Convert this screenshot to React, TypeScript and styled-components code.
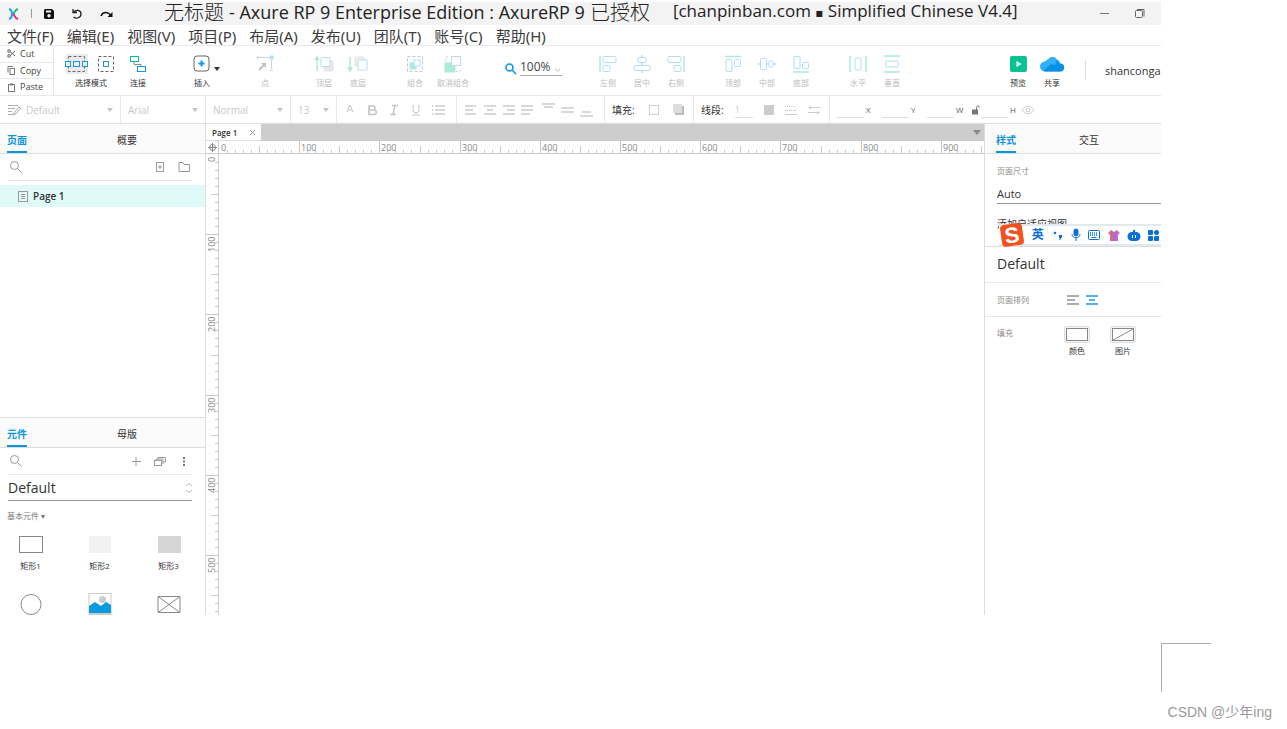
import React, { useLayoutEffect, useRef, useState } from "react";
import styled, { createGlobalStyle, css } from "styled-components";

const latin = `"Open Sans", "Noto Sans CJK SC", sans-serif`;
const blue = "#0a95dd";
const line = "#e8e8e8";

const GlobalStyle = createGlobalStyle`
  *, *::before, *::after { box-sizing: border-box; }
  body { margin: 0; background: #fff; color: #333; font-family: ${latin}; font-size: 8px; }
  button, input, select { font: inherit; color: inherit; background: none; border: 0; padding: 0; margin: 0; border-radius: 0; outline: 0; }
  select { appearance: none; }
  svg { display: block; flex: none; overflow: visible; }
  h1, h2 { margin: 0; font-weight: 400; }
`;

const Page = styled.div`
  display: flex;
  flex-direction: column;
  min-height: 100vh;
`;

const AppWindow = styled.div`
  position: relative;
  display: flex;
  flex: 1;
  flex-direction: column;
  margin: 0 126px 0 0;
  padding-top: 2px;
  overflow: hidden;
`;

/* ---------- title and menu ---------- */
const TitleBar = styled.header`
  display: flex;
  align-items: center;
  height: 23px;
  padding: 0 16px 0 8px;
  background: #f3f3f3;
  white-space: nowrap;
`;

const QuickActions = styled.div`
  display: flex;
  align-items: center;
  gap: 17px;
  width: 156px;
`;

const LogoGroup = styled.div`
  display: flex;
  align-items: center;
  gap: 12px;
`;

const IconButton = styled.button`
  display: flex;
  align-items: center;
  justify-content: center;
`;

const Title = styled.h1`
  display: flex;
  flex: 1;
  align-items: center;
  height: 23px;
  padding-bottom: 3px;
  font-size: 18px;
  line-height: 20px;
  color: #222;
`;

const TitleCjk = styled.span`
  margin-right: 5px;
  font-family: "Noto Sans CJK SC", sans-serif;
  font-weight: 300;
  font-size: 20px;
`;

const TitleText = styled.span`
  margin-right: 5px;
`;

const Version = styled.span`
  margin-left: 18px;
  font-size: 17px;
`;

const Bullet = styled.span`
  font-family: "DejaVu Sans", sans-serif;
  font-size: 12px;
`;

const WindowButtons = styled.div`
  display: flex;
  align-items: center;
  gap: 26px;
`;

const MenuBar = styled.nav`
  display: flex;
  align-items: center;
  gap: 13px;
  height: 21px;
  padding: 1px 7px 0;
  border-bottom: 1px solid ${line};
`;

const MenuItem = styled.button`
  font-size: 15px;
  line-height: 20px;
  font-family: "Noto Sans", "Noto Sans CJK SC", sans-serif;
  white-space: nowrap;
  color: #3c3c3c;
`;

/* ---------- toolbar ---------- */
const Toolbar = styled.div`
  display: flex;
  height: 50px;
  border-bottom: 1px solid ${line};
`;

const Clipboard = styled.div`
  display: flex;
  flex-direction: column;
  width: 54px;
  flex: none;
  border-right: 1px solid ${line};
`;

const ClipButton = styled.button`
  display: flex;
  flex: 1;
  align-items: center;
  gap: 4px;
  padding-left: 7px;
  font-size: 9px;
  line-height: 12px;
  color: #444;
  & + & { border-top: 1px solid ${line}; }
`;

const ToolGroup = styled.div<{ $gap?: number }>`
  display: flex;
  flex: none;
  margin-left: ${(p) => p.$gap ?? 23}px;
`;

const ToolButton = styled.button<{ $width?: number; $dim?: boolean }>`
  position: relative;
  display: flex;
  flex-direction: column;
  align-items: center;
  gap: 4px;
  width: ${(p) => p.$width ?? 34}px;
  padding-top: 9px;
  font-size: 8px;
  line-height: 12px;
  color: #333;
  white-space: nowrap;
  ${(p) => p.$dim && css`color: #bbb; svg { opacity: 0.32; }`}
`;

const IconPair = styled.span`
  display: flex;
  gap: 9px;
  padding-right: 3px;
`;

const CaretBadge = styled.span`
  position: absolute;
  left: 29px;
  top: 21px;
`;

const ZoomField = styled.label`
  display: flex;
  align-items: center;
  gap: 4px;
  height: 42px;
  margin-left: 31px;
`;

const ZoomSelectBox = styled.span`
  display: flex;
  align-items: center;
  width: 42px;
  height: 18px;
  border-bottom: 1px solid #aaa;
  select { width: 34px; font-size: 12px; line-height: 16px; color: #444; }
`;

const Account = styled.div`
  display: flex;
  width: 160px;
  flex: none;
  margin-left: auto;
`;

const UserName = styled.button`
  height: 20px;
  margin: 14px 0 0 16px;
  padding-left: 19px;
  border-left: 1px solid #ddd;
  font-size: 11px;
  color: #333;
`;

/* ---------- format bar ---------- */
const FormatBar = styled.div`
  display: flex;
  height: 28px;
  border-bottom: 1px solid #ddd;
`;

const FormatCell = styled.div<{ $width?: number; $gap?: number }>`
  display: flex;
  flex: ${(p) => (p.$width ? "none" : "1")};
  align-items: center;
  gap: ${(p) => p.$gap ?? 5}px;
  width: ${(p) => (p.$width ? `${p.$width}px` : "auto")};
  padding: 0 7px;
  border-right: ${(p) => (p.$width ? `1px solid ${line}` : "0")};
  color: #c8c8c8;
  select { flex: 1; min-width: 0; font-size: 10px; line-height: 14px; }
`;

const FormatLabel = styled.span`
  font-size: 10px;
  color: #333;
  white-space: nowrap;
`;

const LineWidth = styled.input`
  width: 18px;
  height: 16px;
  border-bottom: 1px solid #ddd;
  font-size: 9px;
`;

const Dimension = styled.label`
  display: flex;
  align-items: center;
  gap: 2px;
  width: 45px;
  font-size: 8px;
  color: #555;
  input { width: 27px; height: 16px; border-bottom: 1px solid #ddd; }
`;

/* ---------- workspace ---------- */
const Workspace = styled.main`
  display: flex;
  flex: 1;
  min-height: 0;
`;

const Sidebar = styled.aside`
  display: flex;
  flex-direction: column;
  flex: none;
  width: 206px;
  border-right: 1px solid #ddd;
`;

const PagesPanel = styled.section`
  flex: 1;
`;

const WidgetsPanel = styled.section`
  height: 198px;
  border-top: 1px solid #ddd;
  overflow: hidden;
`;

const Tabs = styled.div`
  display: grid;
  grid-template-columns: 110px 1fr;
  height: 30px;
  padding-left: 7px;
  background: #fbfbfb;
  border-bottom: 1px solid #ddd;
`;

const RightTabs = styled(Tabs)`
  grid-template-columns: 83px 1fr;
  padding-left: 11px;
`;

const Tab = styled.button<{ $active?: boolean }>`
  justify-self: start;
  height: 29px;
  padding-top: 5px;
  border-bottom: 2px solid ${(p) => (p.$active ? blue : "transparent")};
  font-size: 10px;
  line-height: 14px;
  font-weight: ${(p) => (p.$active ? 700 : 400)};
  color: ${(p) => (p.$active ? blue : "#333")};
`;

const SearchRow = styled.div`
  display: flex;
  align-items: center;
  gap: 12px;
  height: 27px;
  margin: 0 13px 0 8px;
  padding: 0 2px;
  border-bottom: 1px solid ${line};
  input { flex: 1; min-width: 0; }
`;

const TreeRow = styled.button`
  display: flex;
  align-items: center;
  gap: 5px;
  width: 100%;
  height: 22px;
  margin-top: 4px;
  padding-left: 18px;
  background: #e0f9f9;
  font-size: 10px;
  font-weight: 600;
  color: #333;
`;

const LibrarySelect = styled.label`
  display: flex;
  align-items: center;
  height: 26px;
  margin: 0 13px 0 8px;
  border-bottom: 1px solid #999;
  select { flex: 1; font-size: 14px; line-height: 20px; color: #333; }
`;

const SectionName = styled.h2`
  padding: 8px 7px 0;
  font-size: 8px;
  line-height: 14px;
  color: #777;
`;

const WidgetGrid = styled.div`
  display: grid;
  grid-template-columns: repeat(3, 69px);
  grid-auto-rows: 60px;
  margin-top: 10px;
  margin-left: -4px;
`;

const Widget = styled.button`
  display: flex;
  flex-direction: column;
  align-items: center;
  gap: 4px;
  font-size: 8px;
  line-height: 14px;
  color: #333;
`;

/* ---------- canvas ---------- */
const Editor = styled.section`
  display: flex;
  flex: 1;
  flex-direction: column;
  min-width: 0;
`;

const PageTabs = styled.div`
  display: flex;
  align-items: center;
  justify-content: space-between;
  height: 17px;
  padding-right: 3px;
  background: #cdcdcd;
`;

const PageTab = styled.div`
  display: flex;
  align-items: center;
  justify-content: space-between;
  width: 55px;
  height: 17px;
  padding: 0 6px;
  background: #fff;
  border-bottom: 1px solid #ddd;
  font-size: 8px;
  font-weight: 600;
`;

const RulerRow = styled.div`
  display: flex;
  height: 13px;
  border-bottom: 1px solid #ccc;
`;

const RulerCorner = styled.div`
  display: flex;
  align-items: center;
  justify-content: center;
  flex: none;
  width: 13px;
  border-right: 1px solid #ccc;
`;

const CanvasRow = styled.div`
  display: flex;
  flex: 1;
  min-height: 0;
`;

const RulerTrack = styled.div<{ $vertical: boolean }>`
  position: relative;
  overflow: hidden;
  ${(p) =>
    p.$vertical
      ? css`flex: none; width: 13px; border-right: 1px solid #ccc;`
      : css`flex: 1; min-width: 0; height: 12px;`}
  svg { position: absolute; left: 0; top: 0; }
`;

/* ---------- inspector ---------- */
const Inspector = styled.aside`
  position: relative;
  flex: none;
  width: 177px;
  border-left: 1px solid #ddd;
  color: #333;
`;

const SizeSection = styled.section`
  height: 93px;
  padding: 10px 0 0 12px;
  border-bottom: 1px solid #ddd;
`;

const Caption = styled.span`
  display: block;
  font-size: 8px;
  line-height: 14px;
  color: #888;
`;

const SizeSelect = styled.select`
  display: block;
  width: 100%;
  height: 26px;
  padding-top: 6px;
  border-bottom: 1px solid #999;
  font-size: 11px;
`;

const AdaptiveLink = styled.a`
  display: block;
  margin-top: 13px;
  font-size: 10px;
  line-height: 14px;
  color: #333;
  text-decoration: none;
`;

const StyleName = styled.div`
  height: 36px;
  padding-left: 12px;
  border-bottom: 1px solid ${line};
  font-size: 14px;
  line-height: 34px;
  color: #333;
`;

const AlignSection = styled.section`
  display: grid;
  grid-template-columns: 66px 19px 19px;
  align-items: center;
  height: 34px;
  padding-left: 12px;
  border-bottom: 1px solid ${line};
`;

const FillSection = styled.section`
  display: grid;
  grid-template-columns: 57px 46px 46px;
  padding: 9px 0 0 12px;
`;

const FillButton = styled.button`
  display: flex;
  flex-direction: column;
  align-items: center;
  gap: 1px;
  font-size: 8px;
  line-height: 14px;
`;

const ImeBar = styled.div`
  position: absolute;
  left: 14px;
  right: 0;
  top: 100px;
  display: flex;
  align-items: center;
  justify-content: space-between;
  height: 22px;
  padding: 0 2px 0 0;
  background: #fff;
  border-top: 2px solid #e2e8ee;
  border-bottom: 2px solid #e2e8ee;
  color: #0a6fd6;
  font-size: 12px;
  line-height: 18px;
  font-weight: 700;
`;

const Footer = styled.footer`
  display: flex;
  flex-direction: column;
  align-items: flex-end;
  height: 114px;
  padding: 28px 15px 0 0;
`;

const Corner = styled.div`
  width: 50px;
  height: 49px;
  margin-right: 61px;
  border-top: 1px solid #aaa;
  border-left: 1px solid #aaa;
`;

const Watermark = styled.span`
  margin-top: 10px;
  font-family: "Liberation Sans", "Noto Sans CJK SC", sans-serif;
  font-size: 14px;
  line-height: 20px;
  color: #999;
`;

/* ---------- drawings ---------- */
type IconProps = { w?: number; h?: number; stroke?: string; fill?: string; sw?: number; children: React.ReactNode };
const Icon = ({ w = 18, h = 18, stroke = "#999", fill = "none", sw = 1, children }: IconProps) => (
  <svg width={w} height={h} viewBox={`0 0 ${w} ${h}`} fill={fill} stroke={stroke} strokeWidth={sw} aria-hidden="true">
    {children}
  </svg>
);

const B = "#1698ea";
const G = "#08c08d";

const Caret = ({ color = "#aaa" }: { color?: string }) => (
  <Icon w={6} h={4} stroke="none" fill={color}><path d="M0 0h6L3 4z" /></Icon>
);

const SearchIcon = () => (
  <Icon w={12} h={12}><circle cx="4.5" cy="4.5" r="4" /><path d="M7.5 7.5l4 4" /></Icon>
);

const BarsIcon = ({ rows, color = "#c8c8c8", h = 10 }: { rows: number[][]; color?: string; h?: number }) => (
  <Icon w={12} h={h} stroke={color} sw={1.4}>
    {rows.map(([x, y, len], i) => <path key={i} d={`M${x} ${y}h${len}`} />)}
  </Icon>
);

const toolIcons: Record<string, React.ReactNode> = {
  point: <Icon><path d="M1 2.5h12M15.500 5v9" stroke="#777" /><rect x="14" y="1" width="3" height="3" fill={B} stroke={B} /><path d="M14 15.500h3M1.500 1v3" stroke="#777" /><path d="M3 15l5-5" stroke="#444" strokeWidth="2" /><path d="M5 8h5v5z" fill="#444" stroke="none" /></Icon>,
  front: <Icon><path d="M2 16V2M0 5l2-3 2 3" stroke={G} strokeWidth="1.5" /><rect x="9" y="6" width="9" height="10" rx="1" fill="#bbb" stroke="#aaa" /><rect x="6" y="2.500" width="9" height="9" rx="1" fill="#fff" stroke={B} /></Icon>,
  back: <Icon><path d="M1 2v14M-1 12l2 4 2-4" stroke={G} strokeWidth="1.5" /><rect x="6" y="2" width="9" height="9" rx="1" fill="#ccc" stroke="#aaa" /><rect x="9" y="5" width="9" height="10" rx="1" fill="#fff" stroke={B} /></Icon>,
  group: <Icon><rect x="1.500" y="1.500" width="15" height="15" strokeDasharray="3 2" stroke="#555" /><rect x="4" y="8" width="6" height="6" fill={G} stroke={G} /><rect x="8" y="5" width="6" height="6" fill="#fff" stroke={B} /></Icon>,
  ungroup: <Icon><rect x="1" y="8" width="10" height="9" fill={G} stroke={G} /><rect x="7.500" y="1.500" width="9" height="9" fill="#fff" stroke={B} /><path d="M12 16.500h4v-4M2 6V2h4" stroke="#777" strokeDasharray="2 2" /></Icon>,
  left: <Icon><path d="M1 1v16" stroke={G} strokeWidth="1.5" /><rect x="4" y="1.500" width="13" height="6" rx="1" stroke={B} /><rect x="4" y="10.500" width="7" height="6" rx="1" stroke={B} /></Icon>,
  center: <Icon><path d="M9 0v18" stroke={G} strokeWidth="1.500" /><rect x="5" y="2.500" width="8" height="5" rx="1" fill="#fff" stroke={B} /><rect x="1" y="10.500" width="16" height="5" rx="1" fill="#fff" stroke={B} /></Icon>,
  right: <Icon><path d="M17 1v16" stroke={G} strokeWidth="1.500" /><rect x="1" y="1.500" width="13" height="6" rx="1" stroke={B} /><rect x="7" y="10.500" width="7" height="6" rx="1" stroke={B} /></Icon>,
  top: <Icon><path d="M1 1.500h16" stroke={G} strokeWidth="1.500" /><rect x="2" y="4.500" width="6" height="12" rx="1" stroke={B} /><rect x="10.500" y="4.500" width="6" height="7" rx="1" stroke={B} /></Icon>,
  middle: <Icon><path d="M0 9h18" stroke={G} strokeWidth="1.500" /><rect x="2.500" y="3.500" width="6" height="11" rx="1" fill="#fff" stroke={B} /><rect x="10.500" y="6" width="5" height="6" rx="2" fill="#fff" stroke={B} /></Icon>,
  bottom: <Icon><path d="M1 17h16" stroke={G} strokeWidth="1.500" /><rect x="2" y="1.500" width="6" height="12" rx="1" stroke={B} /><rect x="10.500" y="7.500" width="6" height="6" rx="1" stroke={B} /></Icon>,
  horizontal: <Icon><path d="M1 1v16M17 1v16" stroke={G} strokeWidth="1.500" /><rect x="6" y="3" width="6" height="12" rx="1" stroke={B} /></Icon>,
  vertical: <Icon><path d="M1 1h16M1 17h16" stroke={G} strokeWidth="1.500" /><rect x="3" y="6" width="12" height="6" rx="1" stroke={B} /></Icon>,
  connect: <Icon><path d="M5 6v3.500h7V13" stroke="#888" /><rect x="1.500" y="1.500" width="8" height="5" fill="#fff" stroke={G} /><rect x="8.500" y="11.500" width="8" height="5" fill="#fff" stroke={B} /></Icon>,
  insert: <Icon><rect x="1" y="1" width="15" height="15" rx="3" stroke="#666" /><path d="M8.500 5.500v6M5.500 8.500h6" stroke={B} strokeWidth="2" /></Icon>,
  preview: <Icon><rect x="1" y="1" width="17" height="16" rx="2" fill="#0bc196" stroke="none" /><path d="M7.500 6v6l5-3z" fill="#fff" stroke="none" /></Icon>,
  share: <Icon w={24} stroke="none"><path d="M5 16.500a5 5 0 0 1 0-10 5 5 0 0 1 3-2 5 5 0 0 1 9 0 5 5 0 0 1 3 4 4 4 0 0 1 0 8z" fill="#2fb0f8" /><path d="M3 16l8-7 4 1 2-5 3 3.500a4 4 0 0 1 0 8H6z" fill="#0790e4" /></Icon>,
};

const Tool = ({ icon, label, dim = true, width, children }: { icon: string; label: string; dim?: boolean; width?: number; children?: React.ReactNode }) => (
  <ToolButton $dim={dim} $width={width}>
    {toolIcons[icon]}
    {label}
    {children}
  </ToolButton>
);

const SelectCell = ({ label, value, width, icon }: { label: string; value: string; width: number; icon?: React.ReactNode }) => (
  <FormatCell $width={width} as="label">
    {icon}
    <select aria-label={label} defaultValue={value}><option>{value}</option></select>
    <Caret color="#c4c4c4" />
  </FormatCell>
);

const STEP = 80.2;
const Ruler = ({ vertical = false }: { vertical?: boolean }) => {
  const track = useRef<HTMLDivElement>(null);
  const [length, setLength] = useState(0);

  useLayoutEffect(() => {
    const measure = () => {
      const el = track.current;
      if (el) setLength(vertical ? el.clientHeight : el.clientWidth);
    };
    measure();
    window.addEventListener("resize", measure);
    return () => window.removeEventListener("resize", measure);
  }, [vertical]);

  const ticks = Array.from({ length: Math.ceil((length * 10) / STEP) }, (_, i) => {
    const p = Math.round((i * STEP) / 10);
    const len = i % 10 === 0 ? 12 : i % 5 === 0 ? 7 : 3;
    return vertical ? `M${12 - len} ${p + 0.5}h${len}` : `M${p + 0.5} ${12 - len}v${len}`;
  });
  const labels = Array.from({ length: Math.ceil(Math.max(0, length - 20) / STEP) }, (_, i) => i);

  return (
    <RulerTrack ref={track} $vertical={vertical}>
      <svg width={vertical ? 12 : length} height={vertical ? length : 12} aria-hidden="true">
        <path d={ticks.slice(1).join("")} stroke="#c8c8c8" />
        {labels.map((i) =>
          vertical ? (
            <text key={i} transform={`translate(9 ${Math.round(i * STEP) + (i ? 18 : 8)}) rotate(-90)`} fontSize="9" fill="#888">{i * 100}</text>
          ) : (
            <text key={i} x={Math.round(i * STEP) + 2} y="10" fontSize="9" fill="#888">{i * 100}</text>
          )
        )}
      </svg>
    </RulerTrack>
  );
};

const menus = ["文件(F)", "编辑(E)", "视图(V)", "项目(P)", "布局(A)", "发布(U)", "团队(T)", "账号(C)", "帮助(H)"];

const widgets: { name: string; label?: string; icon: React.ReactNode }[] = [
  { name: "Box 1", label: "矩形1", icon: <Icon w={24} h={22}><rect x=".5" y="3.500" width="23" height="16" stroke="#888" /></Icon> },
  { name: "Box 2", label: "矩形2", icon: <Icon w={24} h={22} stroke="none"><rect x="1" y="3" width="22" height="17" fill="#f2f2f2" /></Icon> },
  { name: "Box 3", label: "矩形3", icon: <Icon w={24} h={22} stroke="none"><rect x="1" y="3" width="23" height="17" fill="#d5d5d5" /></Icon> },
  { name: "Ellipse", icon: <Icon w={24} h={22}><circle cx="12" cy="11.500" r="10" stroke="#888" /></Icon> },
  { name: "Image", icon: <Icon w={24} h={22}><rect x="1" y=".5" width="22" height="22" stroke="#ccc" /><circle cx="14.500" cy="6.500" r="3.500" fill="#ccc" stroke="none" /><path d="M1 13l6-4 6 4 5-4 5 3v8H1z" fill="#0a9bdc" stroke="none" /><path d="M1 20h22v2H1z" fill="#ccc" stroke="none" /></Icon> },
  { name: "Placeholder", icon: <Icon w={24} h={22}><path d="M1 3.500h22v16H1zl22 16M23 3.500l-22 16" stroke="#888" /></Icon> },
];

export default function App() {
  return (
    <Page>
      <GlobalStyle />
      <AppWindow>
        <TitleBar>
          <QuickActions>
            <LogoGroup>
              <Icon w={11} h={12} sw={2}><path d="M1 1c4 1 4 9 0 10" stroke="#17a6e8" /><path d="M10 1C6 2 7 5 5 6" stroke="#12bf8d" /><path d="M5 6c2 1 1 4 5 5" stroke="#e8268f" /></Icon>
              <Icon w={1} h={9}><path d="M.5 0v9" stroke="#999" /></Icon>
              <IconButton aria-label="Save"><Icon w={10} h={10} stroke="none" fill="#111"><path fillRule="evenodd" d="M1 0h7l2 2v7l-1 1H1L0 9V1zM2 1.500v2h5v-2zM5 5a1.700 1.700 0 1 0 0 3.400A1.700 1.700 0 0 0 5 5z" /></Icon></IconButton>
            </LogoGroup>
            <IconButton aria-label="Undo"><Icon w={12} h={10} stroke="#222" sw={1.3}><path d="M2 0v3.500h4M2.500 3.500C5 0 10 1 10 5c0 4-5 5-7.500 3" /></Icon></IconButton>
            <IconButton aria-label="Redo"><Icon w={14} h={10} stroke="#111" sw={1.5}><path d="M1 7c2-5 8-4 10 0" /><path d="M12.500 3v5h-5z" fill="#111" stroke="none" /></Icon></IconButton>
          </QuickActions>
          <Title>
            <TitleCjk>无标题</TitleCjk>
            <TitleText>- Axure RP 9 Enterprise Edition : AxureRP 9</TitleText>
            <TitleCjk>已授权</TitleCjk>
            <Version>[chanpinban.com <Bullet>▪</Bullet> Simplified Chinese V4.4]</Version>
          </Title>
          <WindowButtons>
            <IconButton aria-label="Minimize"><Icon w={9} h={9} stroke="#777"><path d="M0 4.500h9" /></Icon></IconButton>
            <IconButton aria-label="Restore"><Icon w={10} h={9} stroke="#666"><rect x=".5" y="1.500" width="7" height="7" rx="1" /><path d="M2 .5h7v7" /></Icon></IconButton>
          </WindowButtons>
        </TitleBar>

        <MenuBar>{menus.map((m) => <MenuItem key={m}>{m}</MenuItem>)}</MenuBar>

        <Toolbar>
          <Clipboard>
            <ClipButton><Icon w={9} h={9} stroke="#666"><circle cx="2" cy="2" r="1.300" /><circle cx="2" cy="7" r="1.300" /><path d="M3 2.500l5 4.500M3 6.500L8 2" /></Icon>Cut</ClipButton>
            <ClipButton><Icon w={9} h={9} stroke="#777"><rect x="3" y="2.500" width="4.500" height="6" /><path d="M1 6.500v-6h5" /></Icon>Copy</ClipButton>
            <ClipButton><Icon w={9} h={9} stroke="#777"><rect x="1.500" y="1.500" width="6" height="7" /><path d="M3 1.500h3" strokeWidth="2" /></Icon>Paste</ClipButton>
          </Clipboard>
          <ToolGroup $gap={7}>
            <ToolButton $width={60}>
              <IconPair>
                <Icon w={23}><rect width="22" height="20" x="1" y="-1" fill="#ebebeb" stroke="none" /><rect x="3.500" y="1.500" width="16" height="15" stroke="#666" strokeDasharray="3 2" /><g stroke={B} fill="#eee"><rect x=".5" y="6.500" width="5" height="5" /><rect x="8.500" y="6.500" width="6" height="5" /><rect x="17.500" y="6.500" width="5" height="5" /></g></Icon>
                <Icon><rect x="1.500" y="1.500" width="15" height="15" stroke="#666" strokeDasharray="3 2" /><rect x="6.500" y="6.500" width="5" height="5" stroke={B} /></Icon>
              </IconPair>
              选择模式
            </ToolButton>
            <Tool icon="connect" label="连接" dim={false} />
          </ToolGroup>
          <ToolGroup $gap={30}><Tool icon="insert" label="插入" dim={false}><CaretBadge><Caret color="#333" /></CaretBadge></Tool></ToolGroup>
          <ToolGroup $gap={29}><Tool icon="point" label="点" /></ToolGroup>
          <ToolGroup $gap={25}><Tool icon="front" label="顶层" /><Tool icon="back" label="底层" /></ToolGroup>
          <ToolGroup><Tool icon="group" label="组合" /><Tool icon="ungroup" label="取消组合" width={42} /></ToolGroup>
          <ZoomField>
            <Icon w={11} h={11} stroke={B} sw={1.7}><circle cx="4.500" cy="5.500" r="3.500" /><path d="M7 8l4 4" /></Icon>
            <ZoomSelectBox>
              <select aria-label="Zoom" defaultValue="100%"><option>100%</option></select>
              <Icon w={7} h={12}><path d="M1 8l2.500 2L6 8" stroke="#bbb" /></Icon>
            </ZoomSelectBox>
          </ZoomField>
          <ToolGroup $gap={29}><Tool icon="left" label="左侧" /><Tool icon="center" label="居中" /><Tool icon="right" label="右侧" /></ToolGroup>
          <ToolGroup><Tool icon="top" label="顶部" /><Tool icon="middle" label="中部" /><Tool icon="bottom" label="底部" /></ToolGroup>
          <ToolGroup><Tool icon="horizontal" label="水平" /><Tool icon="vertical" label="垂直" /></ToolGroup>
          <Account>
            <Tool icon="preview" label="预览" dim={false} />
            <Tool icon="share" label="共享" dim={false} />
            <UserName>shanconga</UserName>
          </Account>
        </Toolbar>

        <FormatBar>
          <SelectCell label="Style" value="Default" width={121} icon={<Icon w={14} h={12} stroke="#aaa"><path d="M1 1.500h10M1 4.500h7M1 7.500h4M1 10.500h5M7 9l5-6 1.500 1.500-5 5.500L6 11z" /></Icon>} />
          <SelectCell label="Font" value="Arial" width={85} />
          <SelectCell label="Weight" value="Normal" width={85} />
          <SelectCell label="Size" value="13" width={46} />
          <FormatCell $width={120} $gap={11}>
            <IconButton aria-label="Text colour"><Icon w={12} h={12} stroke="#c4c4c4"><path d="M3 8l3-7 3 7M4 6h4" /></Icon></IconButton>
            <IconButton aria-label="Bold"><Icon w={10} h={12} stroke="#c4c4c4" sw={1.6}><path d="M2 2h4a2 2 0 0 1 0 4H2zM2 6h5a2 2 0 0 1 0 4.500H2z" /></Icon></IconButton>
            <IconButton aria-label="Italic"><Icon w={12} h={12} stroke="#c4c4c4" sw={1.4}><path d="M4 1.500h6M2 10.500h6M7 1.500l-2 9" /></Icon></IconButton>
            <IconButton aria-label="Underline"><Icon w={10} h={12} stroke="#c4c4c4"><path d="M2 1v5a3 3 0 0 0 6 0V1M1 11h8" /></Icon></IconButton>
            <IconButton aria-label="List"><BarsIcon rows={[[0, 1, 1.5], [3, 1, 10], [0, 5, 1.5], [3, 5, 10], [0, 9, 1.5], [3, 9, 10]]} /></IconButton>
          </FormatCell>
          <FormatCell $width={148} $gap={7}>
            <IconButton aria-label="Align left"><BarsIcon rows={[[1, 1, 11], [1, 5, 8], [1, 9, 11]]} /></IconButton>
            <IconButton aria-label="Align center"><BarsIcon rows={[[1, 1, 12], [4, 5, 6], [1, 9, 12]]} /></IconButton>
            <IconButton aria-label="Align right"><BarsIcon rows={[[1, 1, 12], [5, 5, 8], [1, 9, 12]]} /></IconButton>
            <IconButton aria-label="Justify"><BarsIcon rows={[[0, 1, 12], [0, 5, 12], [0, 9, 9]]} /></IconButton>
            <IconButton aria-label="Align top"><BarsIcon rows={[[2, 2, 13], [4, 5, 9]]} h={16} /></IconButton>
            <IconButton aria-label="Align middle"><BarsIcon rows={[[2, 6, 13], [2, 10, 13]]} h={16} /></IconButton>
            <IconButton aria-label="Align bottom"><BarsIcon rows={[[4, 10, 9], [2, 14, 13]]} h={16} /></IconButton>
          </FormatCell>
          <FormatCell $width={89} $gap={14}>
            <FormatLabel>填充:</FormatLabel>
            <IconButton aria-label="Fill colour"><Icon w={10} h={10}><rect x=".5" y=".5" width="9" height="9" stroke="#ccc" /></Icon></IconButton>
            <IconButton aria-label="Shadow"><Icon w={11} h={11} stroke="none"><path d="M2 2h9v9H2z" fill="#bbb" /><path d="M0 0h9v9H0z" fill="#ddd" /></Icon></IconButton>
          </FormatCell>
          <FormatCell $width={136} $gap={11}>
            <FormatLabel>线段:</FormatLabel>
            <LineWidth aria-label="Line width" defaultValue="1" />
            <IconButton aria-label="Line colour"><Icon w={10} h={10} stroke="none"><rect width="10" height="10" fill="#ccc" /></Icon></IconButton>
            <IconButton aria-label="Line style"><Icon w={12} h={10} stroke="#ccc"><path d="M0 1.500h12" strokeDasharray="1 1" /><path d="M0 5.500h12" strokeDasharray="3 1" /><path d="M0 9.500h12" /></Icon></IconButton>
            <IconButton aria-label="Arrow style"><Icon w={12} h={10} stroke="#ccc"><path d="M12 2.500H1M3 .5l-2 2 2 2M0 7.500h11M9 5.500l2 2-2 2" /></Icon></IconButton>
          </FormatCell>
          <FormatCell $gap={0}>
            <Dimension><input />X</Dimension>
            <Dimension><input />Y</Dimension>
            <Dimension><input />W</Dimension>
            <IconButton aria-label="Lock aspect ratio"><Icon w={9} h={10}><rect x="0" y="4.500" width="6" height="5" fill="#777" stroke="none" /><path d="M4.500 5V2.500a1.500 1.500 0 0 1 3 0" stroke="#777" /></Icon></IconButton>
            <Dimension><input />H</Dimension>
            <IconButton aria-label="Visibility"><Icon w={4} h={8} stroke="#ccc"><path d="M-4 4c3-5 9-5 12 0-3 5-9 5-12 0z" /><circle cx="2" cy="4" r="2" /></Icon></IconButton>
          </FormatCell>
        </FormatBar>

        <Workspace>
          <Sidebar>
            <PagesPanel>
              <Tabs><Tab $active>页面</Tab><Tab>概要</Tab></Tabs>
              <SearchRow>
                <SearchIcon />
                <input aria-label="Search pages" />
                <IconButton aria-label="Add page"><Icon w={12} h={10}><rect x="2.500" y=".5" width="7" height="9" /><path d="M6 3v4M4 5h4" /></Icon></IconButton>
                <IconButton aria-label="Add folder"><Icon w={12} h={10}><path d="M1 .5h4l1 2h5.500v7H1z" /></Icon></IconButton>
              </SearchRow>
              <TreeRow><Icon w={10} h={11}><rect x=".5" y=".5" width="9" height="10" /><path d="M3 3.500h4M3 5.500h4M3 7.500h4" /></Icon>Page 1</TreeRow>
            </PagesPanel>
            <WidgetsPanel>
              <Tabs><Tab $active>元件</Tab><Tab>母版</Tab></Tabs>
              <SearchRow>
                <SearchIcon />
                <input aria-label="Search widgets" />
                <IconButton aria-label="Add library"><Icon w={12} h={9}><path d="M6 0v9M2 4.500h9" /></Icon></IconButton>
                <IconButton aria-label="Libraries"><Icon w={12} h={9}><rect x=".5" y="3.500" width="7" height="5" /><path d="M2 3V2h7v5M4 2V.5h7.500V5H9" /></Icon></IconButton>
                <IconButton aria-label="More"><Icon w={12} h={9} stroke="none" fill="#777"><path d="M5 0h2v2H5zM5 3.500h2v2H5zM5 7h2v2H5z" /></Icon></IconButton>
              </SearchRow>
              <LibrarySelect>
                <select aria-label="Library" defaultValue="Default"><option>Default</option></select>
                <Icon w={6} h={10} stroke="#bbb"><path d="M0 3l3-2.500L6 3M0 7l3 2.500L6 7" /></Icon>
              </LibrarySelect>
              <SectionName>基本元件 ▾</SectionName>
              <WidgetGrid>{widgets.map((w) => <Widget key={w.name} aria-label={w.name}>{w.icon}{w.label}</Widget>)}</WidgetGrid>
            </WidgetsPanel>
          </Sidebar>

          <Editor>
            <PageTabs>
              <PageTab>Page 1<IconButton aria-label="Close tab"><Icon w={5} h={5}><path d="M0 0l5 5M5 0L0 5" /></Icon></IconButton></PageTab>
              <IconButton aria-label="All tabs"><Icon w={8} h={5} stroke="none" fill="#888"><path d="M0 0h8L4 5z" /></Icon></IconButton>
            </PageTabs>
            <RulerRow>
              <RulerCorner><Icon w={9} h={9} stroke="#888"><circle cx="4.500" cy="4.500" r="3" /><path d="M4.500 0v9M0 4.500h9" /></Icon></RulerCorner>
              <Ruler />
            </RulerRow>
            <CanvasRow><Ruler vertical /></CanvasRow>
          </Editor>

          <Inspector>
            <RightTabs><Tab $active>样式</Tab><Tab>交互</Tab></RightTabs>
            <SizeSection>
              <Caption as="label" htmlFor="page-size">页面尺寸</Caption>
              <SizeSelect id="page-size" defaultValue="Auto"><option>Auto</option></SizeSelect>
              <AdaptiveLink href="#">添加自适应视图</AdaptiveLink>
            </SizeSection>
            <StyleName>Default</StyleName>
            <AlignSection>
              <Caption>页面排列</Caption>
              <IconButton aria-label="Align page left"><BarsIcon color="#888" rows={[[0, 2, 12], [0, 6, 8], [0, 10, 12]]} h={11} /></IconButton>
              <IconButton aria-label="Align page center"><BarsIcon color={blue} rows={[[0, 2, 12], [3, 6, 6], [0, 10, 12]]} h={11} /></IconButton>
            </AlignSection>
            <FillSection>
              <Caption>填充</Caption>
              <FillButton><Icon w={26} h={17}><rect x=".5" y=".5" width="25" height="16" rx="2" fill="#f4f4f4" stroke="#ddd" /><rect x="2.500" y="2.500" width="21" height="12" fill="#fff" stroke="#888" /></Icon>颜色</FillButton>
              <FillButton><Icon w={26} h={17}><rect x=".5" y=".5" width="25" height="16" rx="2" fill="#f4f4f4" stroke="#ddd" /><rect x="2.500" y="2.500" width="21" height="12" fill="#fff" stroke="#888" /><path d="M3 14l20-11" stroke="#888" /></Icon>图片</FillButton>
            </FillSection>
            <ImeBar>
              <Icon w={25} h={25} stroke="none"><g transform="rotate(-8 12 12)"><rect x="2" y="1" width="22" height="22" rx="4" fill="#f4511e" /><text x="13" y="20" textAnchor="middle" fontSize="22" fontWeight="700" fill="#fff" fontFamily="Liberation Sans">S</text></g></Icon>
              <span>英</span>
              <Icon w={11} h={11} stroke="none" fill="#0a6fd6"><circle cx="3" cy="3" r="1.300" /><path d="M7 5h3v2L8 10H7l1-2H7z" /></Icon>
              <Icon w={10} h={12} stroke="#0a6fd6"><rect x="3" y="0" width="4" height="7" rx="2" fill="#0a6fd6" /><path d="M1 5c0 5 8 5 8 0M5 9v3" /></Icon>
              <Icon w={12} h={10} stroke="#0a6fd6"><rect x=".5" y=".5" width="11" height="9" rx="1" /><path d="M2 3h8M2 5h8" strokeDasharray="1 1" strokeWidth="1.500" /><path d="M3.500 7.500h5" /></Icon>
              <Icon w={12} h={11} stroke="none"><defs><linearGradient id="shirt"><stop stopColor="#f26b4e" /><stop offset=".6" stopColor="#a56bdc" /><stop offset="1" stopColor="#ed76ac" /></linearGradient></defs><path d="M3 0l3 2 3-2 3 3-2 2v6H2V5L0 3z" fill="url(#shirt)" /></Icon>
              <Icon w={12} h={11} stroke="none" fill="#0a6fd6"><path d="M5 0h2v2h1a4.500 4.500 0 0 1 0 9H4a4.500 4.500 0 0 1 0-9h1z" /><path d="M4 5h1v3H4zM7 5h1v3H7z" fill="#fff" /></Icon>
              <Icon w={11} h={11} stroke="none" fill="#0a6fd6"><rect width="5" height="5" rx="1" /><circle cx="8.500" cy="2.500" r="2.500" /><rect y="6" width="5" height="5" rx="1" /><rect x="6" y="6" width="5" height="5" rx="1" /></Icon>
            </ImeBar>
          </Inspector>
        </Workspace>
      </AppWindow>
      <Footer>
        <Corner />
        <Watermark>CSDN @少年ing</Watermark>
      </Footer>
    </Page>
  );
}
